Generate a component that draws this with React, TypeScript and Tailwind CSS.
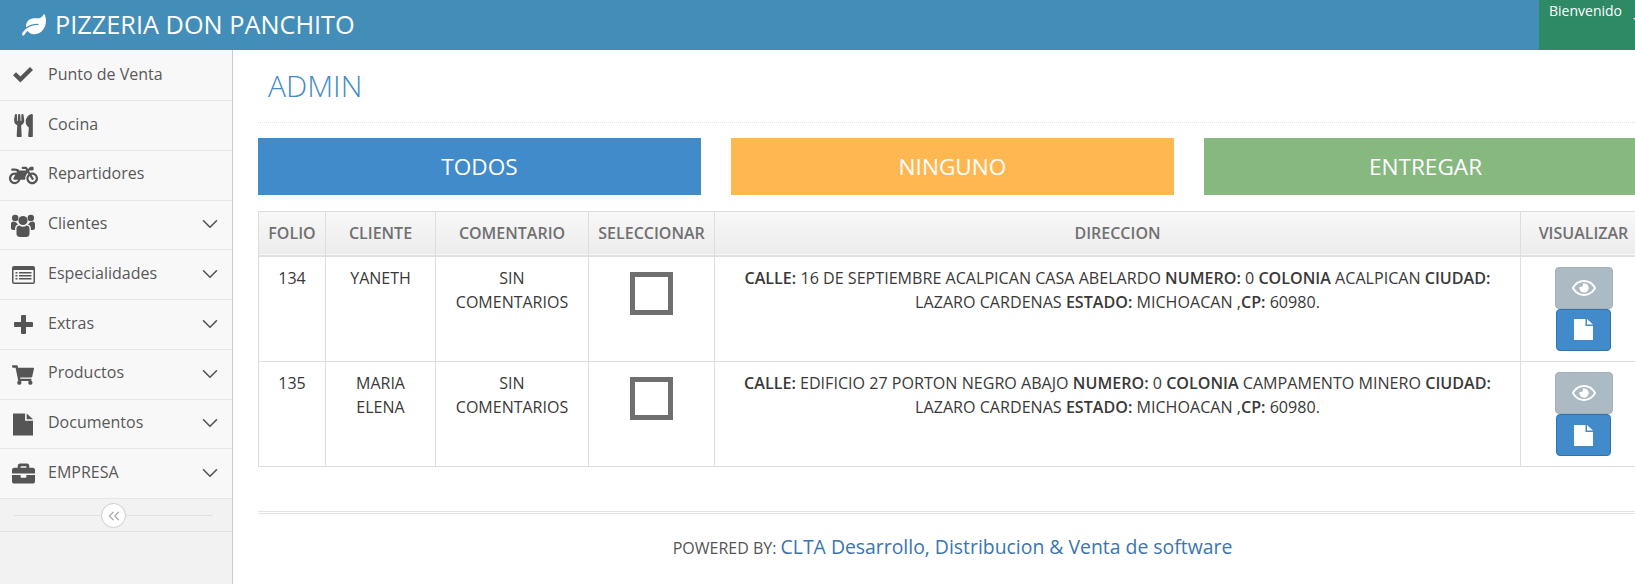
import React from "react";
import { ChevronDown, ChevronsLeft } from "lucide-react";
import { FaBriefcase, FaLeaf, FaMotorcycle, FaRegEye, FaShoppingCart, FaUtensils } from "react-icons/fa";

const CheckIcon = () => (
  <svg viewBox="0 0 20 16" className="h-[16px] w-[20px]" fill="currentColor">
    <path d="M0 8.2 3 5.2 7.4 9.6 17 0 20 3 7.4 15.6Z" />
  </svg>
);

const PlusIcon = () => (
  <svg viewBox="0 0 19 19" className="h-[19px] w-[19px]" fill="currentColor">
    <path d="M7 1a1 1 0 0 1 1-1h3a1 1 0 0 1 1 1v6h6a1 1 0 0 1 1 1v3a1 1 0 0 1-1 1h-6v6a1 1 0 0 1-1 1H8a1 1 0 0 1-1-1v-6H1a1 1 0 0 1-1-1V8a1 1 0 0 1 1-1h6Z" />
  </svg>
);

const FileIcon = ({ className }: { className: string }) => (
  <svg viewBox="0 0 19 21" className={className} fill="currentColor">
    <path d="M0 0h11.5v7H19v14H0Z" />
    <path d="M13 0l6 5.5h-6Z" />
  </svg>
);

const UsersIcon = () => (
  <svg viewBox="0 0 24 23" className="h-[23px] w-[24px]" fill="currentColor">
    <circle cx="12" cy="6.5" r="4.6" />
    <circle cx="4.2" cy="4" r="3.2" />
    <circle cx="19.8" cy="4" r="3.2" />
    <path d="M5.5 14.5c0-2 1.5-3 3-3 1 .8 2.2 1.2 3.5 1.2s2.500-.4 3.500-1.200c1.500 0 3 1 3 3V20c0 2-1.500 3-3.500 3H9c-2 0-3.500-1-3.500-3Z" />
    <path d="M0 10c0-1.500 1-2.500 2.500-2.500.8.500 1.700.800 2.700.800.4 1 1 1.800 1.900 2.300-1.800.500-3 2-3 3.900V16H2c-1.200 0-2-.800-2-2Z" />
    <path d="M24 10c0-1.500-1-2.500-2.500-2.500-.8.500-1.700.800-2.700.800-.4 1-1 1.800-1.900 2.300 1.800.500 3 2 3 3.900V16H22c1.200 0 2-.800 2-2Z" />
  </svg>
);

const ListIcon = () => (
  <svg viewBox="0 0 23 18" className="h-[18px] w-[23px]">
    <rect width="23" height="18" rx="2" fill="currentColor" />
    <rect x="1.500" y="4" width="20" height="12.500" fill="#f8f8f8" />
    <path d="M3.500 6h2v1.500h-2Zm0 3h2v1.500h-2Zm0 3h2v1.500h-2ZM7 6h12.500v1.500H7Zm0 3h12.500v1.500H7Zm0 3h12.500v1.500H7Z" fill="currentColor" />
  </svg>
);

const menu = [
  { label: "Punto de Venta", icon: <CheckIcon />, sub: false, h: "h-[51px] pb-[1px]", t: "pb-[2px]" },
  { label: "Cocina", icon: <FaUtensils className="text-[23px]" />, sub: false, h: "h-[50px]", t: "pb-[4px]" },
  { label: "Repartidores", icon: <FaMotorcycle className="text-[29px]" />, sub: false, h: "h-[50px]", t: "pb-[6px]" },
  { label: "Clientes", icon: <UsersIcon />, sub: true, h: "h-[49px]", t: "pb-[4px]" },
  { label: "Especialidades", icon: <ListIcon />, sub: true, h: "h-[50px]", t: "pb-[4px]" },
  { label: "Extras", icon: <PlusIcon />, sub: true, h: "h-[50px]", t: "pb-[4px]" },
  { label: "Productos", icon: <FaShoppingCart className="text-[22px]" />, sub: true, h: "h-[50px]", t: "pb-[6px]" },
  { label: "Documentos", icon: <FileIcon className="h-[23px] w-[20px]" />, sub: true, h: "h-[49px]", t: "pb-[4px]" },
  { label: "EMPRESA", icon: <FaBriefcase className="text-[23px]" />, sub: true, h: "h-[50px]", t: "pb-[4px]" },
];

const rows = [
  {
    folio: "134",
    cliente: "YANETH",
    calle: "16 DE SEPTIEMBRE ACALPICAN CASA ABELARDO",
    colonia: "ACALPICAN",
    h: "h-[106px]",
  },
  {
    folio: "135",
    cliente: "MARIA ELENA",
    calle: "EDIFICIO 27 PORTON NEGRO ABAJO",
    colonia: "CAMPAMENTO MINERO",
    h: "h-[105px]",
  },
];

const headers = ["FOLIO", "CLIENTE", "COMENTARIO", "SELECCIONAR", "DIRECCION", "VISUALIZAR"];

const App = () => {
  return (
    <div className="h-[584px] w-[1635px] overflow-hidden bg-white font-['Open_Sans',sans-serif] text-[#393939]">
      <header className="flex h-[50px] bg-[#438eb9] text-white">
        <div className="flex flex-1 items-center pl-[22px]">
          <FaLeaf className="mr-[9px] text-[24px]" />
          <span className="text-[25.3px] leading-none">PIZZERIA DON PANCHITO</span>
        </div>
        <div className="w-[96px] overflow-hidden bg-[#2e8965] pl-[10px] pt-[1px] text-[14px] leading-[20px]">
          <div className="flex">
            Bienvenido
            <span className="ml-[11px] mt-[17px] h-0 w-0 shrink-0 border-x-[4px] border-t-[4px] border-x-transparent border-t-white" />
          </div>
        </div>
      </header>

      <div className="flex h-[534px]">
        <aside className="w-[233px] shrink-0 border-r border-[#ccc] bg-[#f2f2f2]">
          <ul className="bg-[#f8f8f8]">
            {menu.map((item) => (
              <li
                key={item.label}
                className={`flex items-center border-b border-[#e5e5e5] text-[16px] text-[#585858] ${item.h}`}
              >
                <span className="flex w-[48px] shrink-0 justify-center pr-[2px] text-[#555]">{item.icon}</span>
                <span className={`flex-1 ${item.t}`}>{item.label}</span>
                {item.sub && <ChevronDown className="mb-[2px] mr-[9px] text-[#555]" size={26} strokeWidth={1.5} />}
              </li>
            ))}
          </ul>
          <div className="relative h-[33px] border-b border-[#e0e0e0]">
            <div className="absolute left-[14px] right-[19px] top-[16px] h-px bg-[#e0e0e0]" />
            <div className="absolute left-[101px] top-[4px] flex h-[25px] w-[25px] items-center justify-center rounded-full border border-[#ccc] bg-white text-[#aaa]">
              <ChevronsLeft size={18} strokeWidth={1.6} />
            </div>
          </div>
        </aside>

        <main className="min-w-0 flex-1 overflow-hidden pl-[25px]">
          <div className="w-[1389px]">
            <div className="h-[73px] border-b border-dotted border-[#e2e2e2] pl-[10px] pt-[14px]">
              <h1 className="text-[30px] font-light leading-[44px] text-[#428bca]">ADMIN</h1>
            </div>

            <div className="mt-[15px] flex gap-[30px]">
              <button className="h-[57px] flex-1 bg-[#428bca] text-[22.6px] text-white">TODOS</button>
              <button className="h-[57px] flex-1 bg-[#ffb752] text-[22.6px] text-white">NINGUNO</button>
              <button className="h-[57px] flex-1 bg-[#87b87f] text-[22.6px] text-white">ENTREGAR</button>
            </div>

            <table className="mt-[16px] w-full table-fixed border-collapse border border-[#ddd] text-center text-[16px] leading-[24px]">
              <colgroup>
                <col className="w-[67px]" />
                <col className="w-[110px]" />
                <col className="w-[153px]" />
                <col className="w-[126px]" />
                <col className="w-[806px]" />
                <col />
              </colgroup>
              <thead>
                <tr className="h-[44px] border-b-2 border-[#e0e0e0] bg-gradient-to-b from-[#f8f8f8] to-[#ececec]">
                  {headers.map((h) => (
                    <th key={h} className="whitespace-nowrap border-x border-[#ddd] font-semibold text-[#707070]">
                      {h}
                    </th>
                  ))}
                </tr>
              </thead>
              <tbody>
                {rows.map((row) => (
                  <tr key={row.folio} className={`border-b border-[#ddd] align-top ${row.h}`}>
                    <td className="border-x border-[#ddd] px-2 py-[9px]">{row.folio}</td>
                    <td className="border-x border-[#ddd] px-[20px] py-[9px]">{row.cliente}</td>
                    <td className="border-x border-[#ddd] px-2 py-[9px]">
                      SIN
                      <br />
                      COMENTARIOS
                    </td>
                    <td className="border-x border-[#ddd] py-[15px]">
                      <div className="mx-auto h-[43px] w-[43px] border-[5px] border-[#6f6f6f]" />
                    </td>
                    <td className="border-x border-[#ddd] px-2 py-[9px] text-[16.1px]">
                      <b className="font-semibold">CALLE:</b> {row.calle} <b className="font-semibold">NUMERO:</b> 0{" "}
                      <b className="font-semibold">COLONIA</b> {row.colonia} <b className="font-semibold">CIUDAD:</b>
                      <br />
                      LAZARO CARDENAS <b className="font-semibold">ESTADO:</b> MICHOACAN ,
                      <b className="font-semibold">CP:</b> 60980.
                    </td>
                    <td className="border-x border-[#ddd] pt-[10px]">
                      <div className="flex flex-col items-center">
                        <button className="flex h-[42px] w-[58px] items-center justify-center rounded-[4px] border border-[#a3b0ba] bg-[#abbac3] text-[24px] text-white">
                          <FaRegEye />
                        </button>
                        <button className="flex h-[42px] w-[55px] items-center justify-center rounded-[4px] border border-[#2f73ad] bg-[#428bca] text-white">
                          <FileIcon className="h-[21px] w-[19px]" />
                        </button>
                      </div>
                    </td>
                  </tr>
                ))}
              </tbody>
            </table>

            <footer className="mt-[44px] border-t border-[#e3e3e3] pt-[1px] text-center text-[16px]">
              <div className="border-t border-[#e3e3e3] pt-[18px]">
                <span className="text-[#555]">POWERED BY:</span>{" "}
                <span className="text-[19.4px] text-[#3a75b0]">CLTA Desarrollo, Distribucion &amp; Venta de software</span>
              </div>
            </footer>
          </div>
        </main>
      </div>
    </div>
  );
};

export default App;
